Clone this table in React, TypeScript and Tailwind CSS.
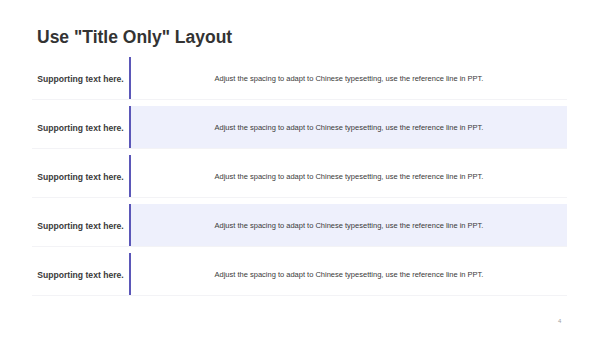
import React from "react";

const rows = [false, true, false, true, false];

export default function App() {
  return (
    <div className="w-[600px] h-[337px] bg-white relative overflow-hidden font-['Liberation_Sans',Arial,sans-serif]">
      <div className="pl-[32px] pt-[27px] w-[567px]">
        {/* Title */}
        <h1 className="pl-[5px] text-[17.5px] leading-[20px] font-bold text-[#333333]">
          Use "Title Only" Layout
        </h1>

        {/* Rows */}
        <div className="mt-[10px] flex flex-col gap-[6px]">
          {rows.map((shaded, i) => (
            <div key={i} className="h-[43px] flex border-b border-[#f3f3f6]">
              <div className="w-[97px] pt-[2px] flex items-center justify-center text-[8.6px] font-bold text-[#3a3a3a]">
                Supporting text here.
              </div>
              <div className="w-[2px] bg-[#5b57b8]" />
              <div
                className={
                  shaded
                    ? "flex-1 pt-[1px] flex items-center justify-center text-[7.5px] text-[#3a3a3a] bg-[#eef0fc]"
                    : "flex-1 pt-[1px] flex items-center justify-center text-[7.5px] text-[#3a3a3a]"
                }
              >
                Adjust the spacing to adapt to Chinese typesetting, use the reference line in PPT.
              </div>
            </div>
          ))}
        </div>
      </div>

      {/* Page number */}
      <div className="absolute left-[558px] top-[317px] text-[6px] text-[#a0a0a0]">4</div>
    </div>
  );
}
